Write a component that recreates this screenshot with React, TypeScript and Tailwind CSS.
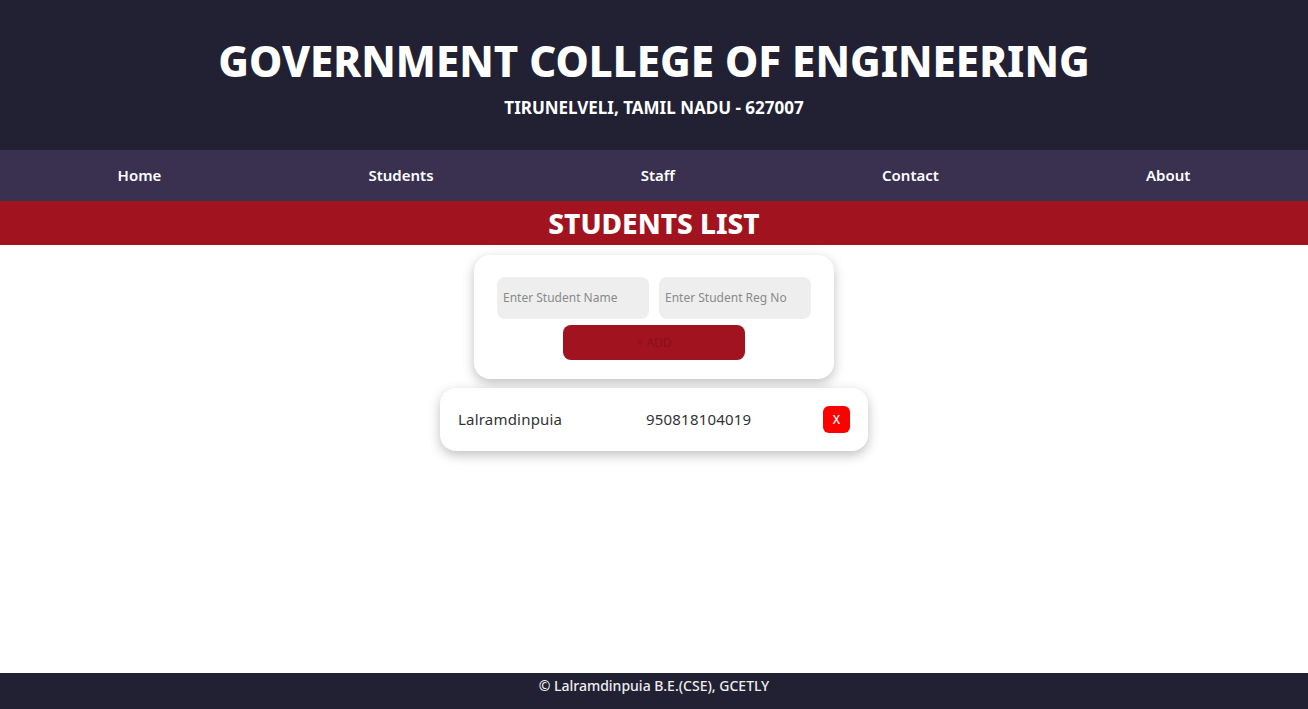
import { useState } from 'react';

interface Student {
  name: string;
  regNo: string;
}

const NAV_ITEMS = ['Home', 'Students', 'Staff', 'Contact', 'About'];

export default function App() {
  const [name, setName] = useState('');
  const [regNo, setRegNo] = useState('');
  const [students, setStudents] = useState<Student[]>([
    { name: 'Lalramdinpuia', regNo: '950818104019' },
  ]);

  const handleAdd = () => {
    if (!name || !regNo) return;
    setStudents((prev) => [...prev, { name, regNo }]);
    setName('');
    setRegNo('');
  };

  const handleRemove = (idx: number) => {
    setStudents((prev) => prev.filter((_, i) => i !== idx));
  };

  return (
    <div className="min-h-[709px] flex flex-col bg-white font-['Noto_Sans',sans-serif]">
      <header className="h-[150px] bg-[#212133] flex flex-col items-center pt-[40px] text-white">
        <h1 className="text-[42px] font-extrabold leading-none">GOVERNMENT COLLEGE OF ENGINEERING</h1>
        <p className="text-[17px] font-bold mt-[13px]">TIRUNELVELI, TAMIL NADU - 627007</p>
      </header>

      <nav className="h-[51px] bg-[#3a3150] flex items-center justify-around px-3.5">
        {NAV_ITEMS.map((item) => (
          <a key={item} className="text-white text-[15px] font-semibold cursor-pointer">
            {item}
          </a>
        ))}
      </nav>

      <div className="h-[44px] bg-[#a1131e] flex items-center justify-center">
        <h2 className="text-white text-[28px] font-extrabold">STUDENTS LIST</h2>
      </div>

      <main className="flex-1 flex flex-col items-center pt-[10px]">
        <div className="w-[360px] rounded-2xl bg-white shadow-[0_4px_12px_rgba(0,0,0,0.25)] px-[23px] pt-[22px] pb-[19px] flex flex-col items-center">
          <div className="flex gap-[10px]">
            <input
              value={name}
              onChange={(e) => setName(e.target.value)}
              placeholder="Enter Student Name"
              className="w-[152px] h-[42px] rounded-lg bg-[#eeeeee] px-[6px] pb-[2px] text-[12px] text-gray-700 placeholder:text-[#8a8a8a] outline-none"
            />
            <input
              value={regNo}
              onChange={(e) => setRegNo(e.target.value)}
              placeholder="Enter Student Reg No"
              className="w-[152px] h-[42px] rounded-lg bg-[#eeeeee] px-[6px] pb-[2px] text-[12px] text-gray-700 placeholder:text-[#8a8a8a] outline-none"
            />
          </div>
          <button
            onClick={handleAdd}
            className="mt-[6px] w-[182px] h-[35px] rounded-lg bg-[#a1131e] text-[#8a1019] text-[12px]"
          >
            + ADD
          </button>
        </div>

        {students.map((s, idx) => (
          <div
            key={idx}
            className="mt-[9px] w-[428px] h-[63px] rounded-2xl bg-white shadow-[0_4px_12px_rgba(0,0,0,0.25)] flex items-center pl-[18px] pr-[18px]"
          >
            <span className="w-[188px] text-[15px] text-[#333] tracking-[0.2px]">{s.name}</span>
            <span className="flex-1 text-[15px] text-[#333] tracking-[0.2px]">{s.regNo}</span>
            <button
              onClick={() => handleRemove(idx)}
              className="w-[27px] h-[27px] rounded-md bg-[#ff0000] text-white text-[12px] font-medium"
            >
              X
            </button>
          </div>
        ))}
      </main>

      <footer className="h-[36px] bg-[#212133] flex items-start justify-center pt-[2px]">
        <p className="text-[#eeeeee] text-[14px] font-medium">© Lalramdinpuia B.E.(CSE), GCETLY</p>
      </footer>
    </div>
  );
}
